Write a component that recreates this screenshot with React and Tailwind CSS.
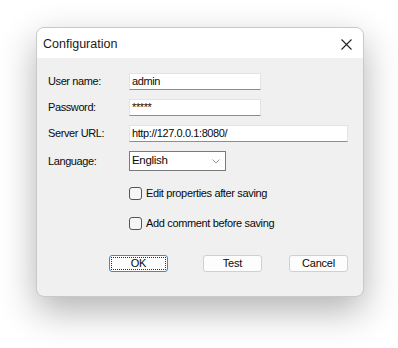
import React from "react";

const font = { fontFamily: '"Liberation Sans", Arial, sans-serif' };

function Field({ label, value, width }) {
  return (
    <div className="flex items-center h-[17px]">
      <div className="w-[81px] text-[11px] tracking-[-0.4px] text-[#0a0a0a] leading-none">{label}</div>
      <div
        className="h-[17px] bg-white border border-[#e3e3e3] border-b-[#8d8d8d] flex items-center pl-[2px] text-[11px] tracking-[-0.4px] text-[#0a0a0a] leading-none"
        style={{ width }}
      >
        {value}
      </div>
    </div>
  );
}

function Check({ label }) {
  return (
    <div className="flex items-center h-[13px] pl-[81px]">
      <div className="w-[13px] h-[13px] rounded-[3px] border border-[#555] bg-[#f6f6f6]" />
      <div className="ml-[4px] text-[11px] tracking-[-0.35px] text-[#0a0a0a] leading-none">{label}</div>
    </div>
  );
}

function Btn({ children, focused }) {
  return (
    <div
      className={
        "w-[59px] h-[17px] rounded-[3px] bg-[#fdfdfd] flex items-center justify-center text-[11px] tracking-[-0.2px] text-[#0a0a0a] leading-none " +
        (focused ? "border border-[#3a8ad8] p-[1px]" : "border border-[#d0d0d0]")
      }
    >
      {focused ? (
        <div className="w-full h-full border border-dotted border-[#333] flex items-center justify-center">{children}</div>
      ) : (
        children
      )}
    </div>
  );
}

export default function App() {
  return (
    <div className="w-[398px] h-[348px] bg-white pl-[36px] pt-[27px]" style={font}>
      <div className="w-[328px] h-[270px] rounded-[8px] border border-[#c9c9c9] bg-[#f0f0f0] shadow-[0_14px_36px_rgba(0,0,0,0.3)] overflow-hidden flex flex-col">
        <div className="h-[30px] bg-white flex items-center justify-between pl-[6px] pr-[11px] pt-[2px]">
          <div className="text-[12.5px] text-[#1a1a1a] leading-none">Configuration</div>
          <svg width="11" height="11" viewBox="0 0 11 11">
            <path d="M0.5 0.5 L10.5 10.5 M10.5 0.5 L0.5 10.5" stroke="#222" strokeWidth="1.1" fill="none" />
          </svg>
        </div>
        <div className="flex flex-col pl-[11px] pt-[15px]">
          <Field label="User name:" value="admin" width={132} />
          <div className="mt-[9px]">
            <Field label="Password:" value="*****" width={132} />
          </div>
          <div className="mt-[9px]">
            <Field label="Server URL:" value="http://127.0.0.1:8080/" width={219} />
          </div>
          <div className="mt-[9px] flex items-center h-[20px]">
            <div className="w-[81px] text-[11px] tracking-[-0.4px] text-[#0a0a0a] leading-none">Language:</div>
            <div className="w-[97px] h-[20px] bg-white border border-[#7a7a7a] flex items-center justify-between pl-[2px] pr-[5px]">
              <span className="text-[11.5px] tracking-[-0.3px] text-[#0a0a0a] leading-none">English</span>
              <svg width="8" height="5" viewBox="0 0 8 5">
                <path d="M0.5 0.5 L4 4 L7.5 0.5" stroke="#999" strokeWidth="1" fill="none" />
              </svg>
            </div>
          </div>
          <div className="mt-[16px]">
            <Check label="Edit properties after saving" />
          </div>
          <div className="mt-[17px]">
            <Check label="Add comment before saving" />
          </div>
          <div className="mt-[25px] flex pl-[61px]">
            <Btn focused>OK</Btn>
            <div className="ml-[35px]">
              <Btn>Test</Btn>
            </div>
            <div className="ml-[27px]">
              <Btn>Cancel</Btn>
            </div>
          </div>
        </div>
      </div>
    </div>
  );
}
